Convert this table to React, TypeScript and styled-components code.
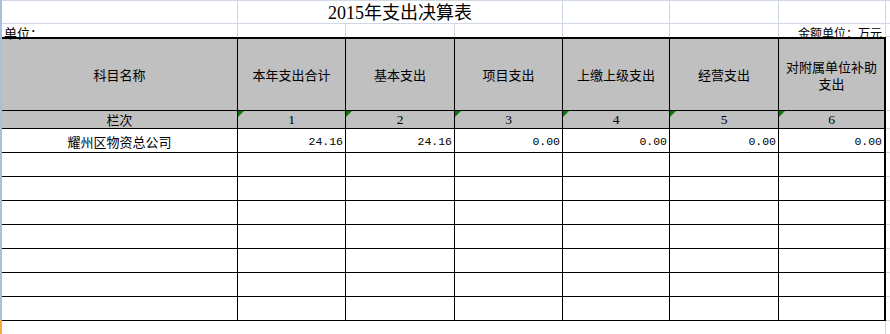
import React from "react";
import styled, { createGlobalStyle, css } from "styled-components";

const GRID = "#d0d7e5";
const HEAD = "#c0c0c0";
const LINE = "#000";
const CJK = `"Noto Sans CJK SC", "Noto Sans", sans-serif`;

const Global = createGlobalStyle`
  *, *::before, *::after { box-sizing: border-box; }
  html, body { margin: 0; padding: 0; background: #fff; }
  body { font-family: ${CJK}; color: #000; }
`;

const Page = styled.div`
  display: flex;
  width: 890px;
  height: 334px;
  overflow: hidden;
  background: #fff;
`;

const Gutter = styled.div`
  width: 2px;
  flex: none;
  display: grid;
  grid-template-rows: 320px 1fr;
`;

const GutterPart = styled.div<{ $active?: boolean }>`
  background: ${(p) => (p.$active ? "#f4a940" : "#a9c0dc")};
`;

const Sheet = styled.div`
  flex: 1;
  display: grid;
  grid-template-columns: 236px 108px 109px 108px 107px 109px 107px 4px;
  grid-template-rows: 23px 13px 74px 18px repeat(8, 24px) 13px;
  border-top: 1px solid ${GRID};
`;

const TopCell = styled.div<{ $span?: number; $bottom?: boolean; $align?: "left" | "center" | "right" }>`
  grid-column: span ${(p) => p.$span ?? 1};
  display: flex;
  align-items: flex-end;
  justify-content: ${(p) =>
    p.$align === "right" ? "flex-end" : p.$align === "center" ? "center" : "flex-start"};
  border-right: 1px solid ${GRID};
  border-bottom: ${(p) => (p.$bottom ? `1px solid ${GRID}` : "none")};
  overflow: visible;
  white-space: nowrap;
  position: relative;
  z-index: 1;
`;

const Title = styled.span`
  font-family: "Liberation Serif", ${CJK};
  font-size: 18px;
  line-height: 20px;
`;

const Note = styled.span<{ $size?: number }>`
  font-size: ${(p) => p.$size ?? 13}px;
  line-height: 13px;
  padding: 0 3px 0 2px;
  transform: translateY(2px);
`;

const StripCell = styled.div<{ $bottom?: boolean }>`
  border-bottom: ${(p) => (p.$bottom ? `1px solid ${GRID}` : "none")};
`;

const HeadCell = styled.div<{ $last?: boolean }>`
  background: ${HEAD};
  border-top: 2px solid ${LINE};
  border-bottom: 1px solid ${LINE};
  border-right: ${(p) => (p.$last ? 2 : 1)}px solid ${LINE};
  display: flex;
  flex-direction: column;
  align-items: center;
  justify-content: center;
  text-align: center;
  font-size: 13px;
  line-height: 17px;
`;

const HeadLine = styled.span`
  display: block;
  line-height: 17px;
`;

const IndexCell = styled.div<{ $last?: boolean; $mark?: boolean }>`
  position: relative;
  background: ${HEAD};
  border-bottom: 1px solid ${LINE};
  border-right: ${(p) => (p.$last ? 2 : 1)}px solid ${LINE};
  display: flex;
  align-items: center;
  justify-content: center;
  font-size: 13px;
  line-height: 17px;
  ${(p) =>
    p.$mark &&
    css`
      &::before {
        content: "";
        position: absolute;
        top: 0;
        left: 0;
        border-top: 6px solid #0a7a0a;
        border-right: 6px solid transparent;
      }
    `}
`;

const IndexNum = styled.span`
  font-family: "Liberation Serif", serif;
  font-size: 13.5px;
`;

const DataCell = styled.div<{ $last?: boolean; $num?: boolean }>`
  background: #fff;
  border-bottom: 1px solid ${LINE};
  border-right: ${(p) => (p.$last ? 2 : 1)}px solid ${LINE};
  display: flex;
  align-items: flex-end;
  justify-content: ${(p) => (p.$num ? "flex-end" : "center")};
  padding: 0 2px 3px 2px;
  font-family: ${(p) => (p.$num ? `"Liberation Mono", monospace` : CJK)};
  font-size: ${(p) => (p.$num ? "11.5px" : "13px")};
  line-height: 15px;
  white-space: nowrap;
`;

const FillCell = styled.div<{ $edge?: boolean }>`
  border-right: ${(p) => (p.$edge ? `1px solid ${GRID}` : "none")};
`;

const headers: string[][] = [
  ["科目名称"],
  ["本年支出合计"],
  ["基本支出"],
  ["项目支出"],
  ["上缴上级支出"],
  ["经营支出"],
  ["对附属单位补助", "支出"],
];

const rows: string[][] = [
  ["耀州区物资总公司", "24.16", "24.16", "0.00", "0.00", "0.00", "0.00"],
  ...Array.from({ length: 7 }, () => ["", "", "", "", "", "", ""]),
];

export default function App() {
  return (
    <>
      <Global />
      <Page>
        <Gutter>
          <GutterPart />
          <GutterPart $active />
        </Gutter>
        <Sheet>
          {/* row 1 */}
          <TopCell $bottom />
          <TopCell $span={3} $bottom $align="center">
            <Title>2015年支出决算表</Title>
          </TopCell>
          <TopCell $bottom />
          <TopCell $bottom />
          <TopCell $bottom />
          <StripCell $bottom />

          {/* row 2 */}
          <TopCell>
            <Note>单位：</Note>
          </TopCell>
          <TopCell />
          <TopCell />
          <TopCell />
          <TopCell />
          <TopCell />
          <TopCell $align="right">
            <Note $size={12}>金额单位：万元</Note>
          </TopCell>
          <StripCell $bottom />

          {/* header */}
          {headers.map((h, i) => (
            <HeadCell key={i} $last={i === headers.length - 1}>
              {h.map((line, li) => (
                <HeadLine key={li}>{line}</HeadLine>
              ))}
            </HeadCell>
          ))}
          <StripCell $bottom />

          {/* index row */}
          <IndexCell>
            <span>栏次</span>
          </IndexCell>
          {[1, 2, 3, 4, 5, 6].map((n) => (
            <IndexCell key={n} $mark $last={n === 6}>
              <IndexNum>{n}</IndexNum>
            </IndexCell>
          ))}
          <StripCell $bottom />

          {/* data rows */}
          {rows.map((r, ri) => (
            <React.Fragment key={ri}>
              {r.map((v, ci) => (
                <DataCell key={ci} $num={ci > 0} $last={ci === 6}>
                  {v}
                </DataCell>
              ))}
              <StripCell $bottom />
            </React.Fragment>
          ))}

          {/* filler */}
          <FillCell />
          <FillCell />
          <FillCell />
          <FillCell />
          <FillCell />
          <FillCell />
          <FillCell $edge />
          <StripCell />
        </Sheet>
      </Page>
    </>
  );
}
